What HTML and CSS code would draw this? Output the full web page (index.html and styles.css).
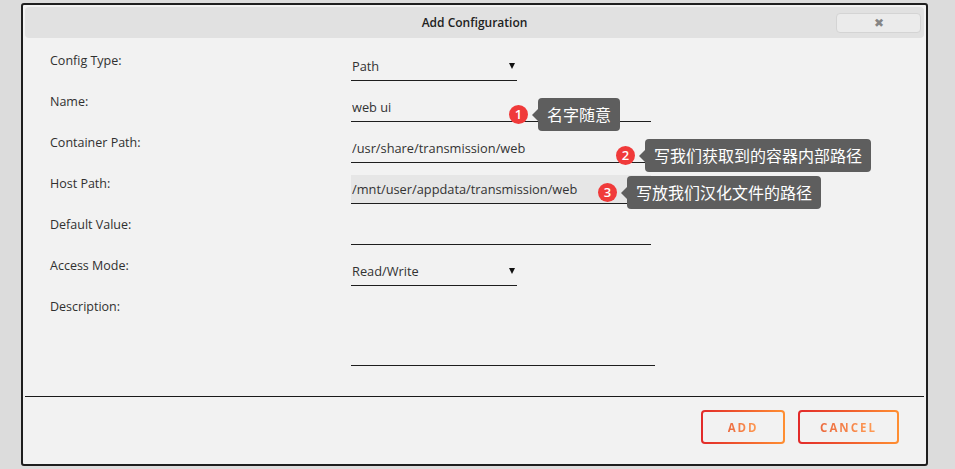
FILE: index.html
```html
<!DOCTYPE html>
<html lang="zh-CN">
<head>
  <meta charset="UTF-8">
  <meta name="viewport" content="width=device-width, initial-scale=1.0">
  <title>Add Configuration</title>
  <link rel="stylesheet" href="styles.css">
</head>
<body>
  <div id="dialog">
    <div class="titlebar">
      <span></span>
      <h1>Add Configuration</h1>
      <button class="close">&#10006;</button>
    </div>

    <form class="config-form">
      <div class="row">
        <label>Config Type:</label>
        <div class="select short">
          <select><option>Path</option><option>Port</option><option>Variable</option></select>
        </div>
      </div>
      <div class="row">
        <label>Name:</label>
        <input class="field" type="text" value="web ui">
      </div>
      <div class="row">
        <label>Container Path:</label>
        <input class="field" type="text" value="/usr/share/transmission/web">
      </div>
      <div class="row">
        <label>Host Path:</label>
        <input class="field filled" type="text" value="/mnt/user/appdata/transmission/web">
      </div>
      <div class="row">
        <label>Default Value:</label>
        <input class="field" type="text" value="">
      </div>
      <div class="row">
        <label>Access Mode:</label>
        <div class="select short">
          <select><option>Read/Write</option><option>Read Only</option></select>
        </div>
      </div>
      <div class="row row-desc">
        <label>Description:</label>
        <textarea class="desc"></textarea>
      </div>
    </form>

    <div class="footer">
      <button class="btn"><span>ADD</span></button>
      <button class="btn"><span>CANCEL</span></button>
    </div>

    <!-- anotações -->
    <div class="note n1"><span class="dot">1</span><span class="tip">名字随意</span></div>
    <div class="note n2"><span class="dot">2</span><span class="tip">写我们获取到的容器内部路径</span></div>
    <div class="note n3"><span class="dot">3</span><span class="tip">写放我们汉化文件的路径</span></div>
  </div>
</body>
</html>
```

FILE: styles.css
```css
* {
  margin: 0;
  padding: 0;
  box-sizing: border-box;
}

body {
  background-color: #dcdcdc;
  font-family: "Open Sans", "Noto Sans CJK SC", sans-serif;
  color: #303030;
}

#dialog {
  position: relative;
  margin: 3px 0 0 21px;
  width: 907px;
  height: 463px;
  border: 2px solid #1e1e1e;
  border-radius: 3px;
  padding: 2px;
  background-color: #f2f2f2;
  display: flex;
  flex-direction: column;
}

.titlebar {
  height: 31px;
  background-color: #e1e1e1;
  border-radius: 4px;
  display: grid;
  grid-template-columns: 1fr auto 1fr;
  align-items: center;
}

.titlebar h1 {
  font-size: 12px;
  font-weight: 600;
  color: #222;
}

.close {
  justify-self: end;
  margin-right: 3px;
  width: 85px;
  height: 20px;
  border: 1px solid #d4d4d4;
  border-radius: 4px;
  background-color: #ebebeb;
  color: #858585;
  font-size: 12px;
  line-height: 18px;
  cursor: pointer;
}

.config-form {
  padding: 2px 0 0 25px;
}

.row {
  display: grid;
  grid-template-columns: 301px auto;
  height: 41px;
}

.row label {
  padding-top: 13px;
  font-size: 12.5px;
  line-height: 16px;
}

.field,
.select select,
.desc {
  font-family: "Open Sans", sans-serif;
  font-size: 12.8px;
  color: #333;
  border: none;
  border-bottom: 1px solid #1e1e1e;
  background: transparent;
  outline: none;
}

.field {
  align-self: end;
  width: 300px;
  height: 29px;
  padding: 0 1px;
}

.filled {
  background-color: #e6e6e6;
}

.select {
  position: relative;
  align-self: end;
  width: 166px;
}

.select select {
  appearance: none;
  -webkit-appearance: none;
  width: 100%;
  height: 29px;
  padding: 0 1px;
}

.select::after {
  content: "";
  position: absolute;
  right: 2px;
  top: 11px;
  border-left: 3px solid transparent;
  border-right: 3px solid transparent;
  border-top: 6px solid #111;
  pointer-events: none;
}

.row-desc {
  height: auto;
}

.desc {
  width: 304px;
  height: 80px;
  resize: none;
}

.footer {
  margin-top: auto;
  height: 66px;
  border-top: 1px solid #1a1a1a;
  padding: 13px 25px 0 0;
  display: flex;
  justify-content: flex-end;
  align-items: flex-start;
  gap: 13px;
}

.btn {
  min-width: 84px;
  height: 34px;
  padding: 0 20px;
  border: 2px solid transparent;
  border-radius: 4px;
  background: linear-gradient(#f2f2f2, #f2f2f2) padding-box,
              linear-gradient(90deg, #e22a2a, #ff8f32) border-box;
  cursor: pointer;
}

.btn span {
  font-family: "Open Sans", sans-serif;
  font-size: 11.5px;
  font-weight: 700;
  letter-spacing: 2px;
  background: linear-gradient(90deg, #ec6a3e, #ff9d55);
  -webkit-background-clip: text;
  background-clip: text;
  color: transparent;
}

/* anotações por cima do formulário */
.note {
  position: absolute;
  display: flex;
  align-items: center;
  height: 33px;
}

.n1 { left: 486px; top: 93px; }
.n2 { left: 593px; top: 134px; }
.n3 { left: 575px; top: 171px; }

.dot {
  width: 19px;
  height: 19px;
  border-radius: 50%;
  background-color: #f03a3a;
  color: white;
  font-size: 13px;
  font-weight: 600;
  line-height: 19px;
  text-align: center;
  margin-right: 10px;
}

.tip {
  position: relative;
  height: 33px;
  padding: 0 9px;
  border-radius: 4px;
  background-color: #5e5e5e;
  color: white;
  font-family: "Noto Sans CJK SC", sans-serif;
  font-size: 16px;
  line-height: 33px;
}

.tip::before {
  content: "";
  position: absolute;
  left: -6px;
  top: 11px;
  border-top: 6px solid transparent;
  border-bottom: 6px solid transparent;
  border-right: 6px solid #5e5e5e;
}
```
